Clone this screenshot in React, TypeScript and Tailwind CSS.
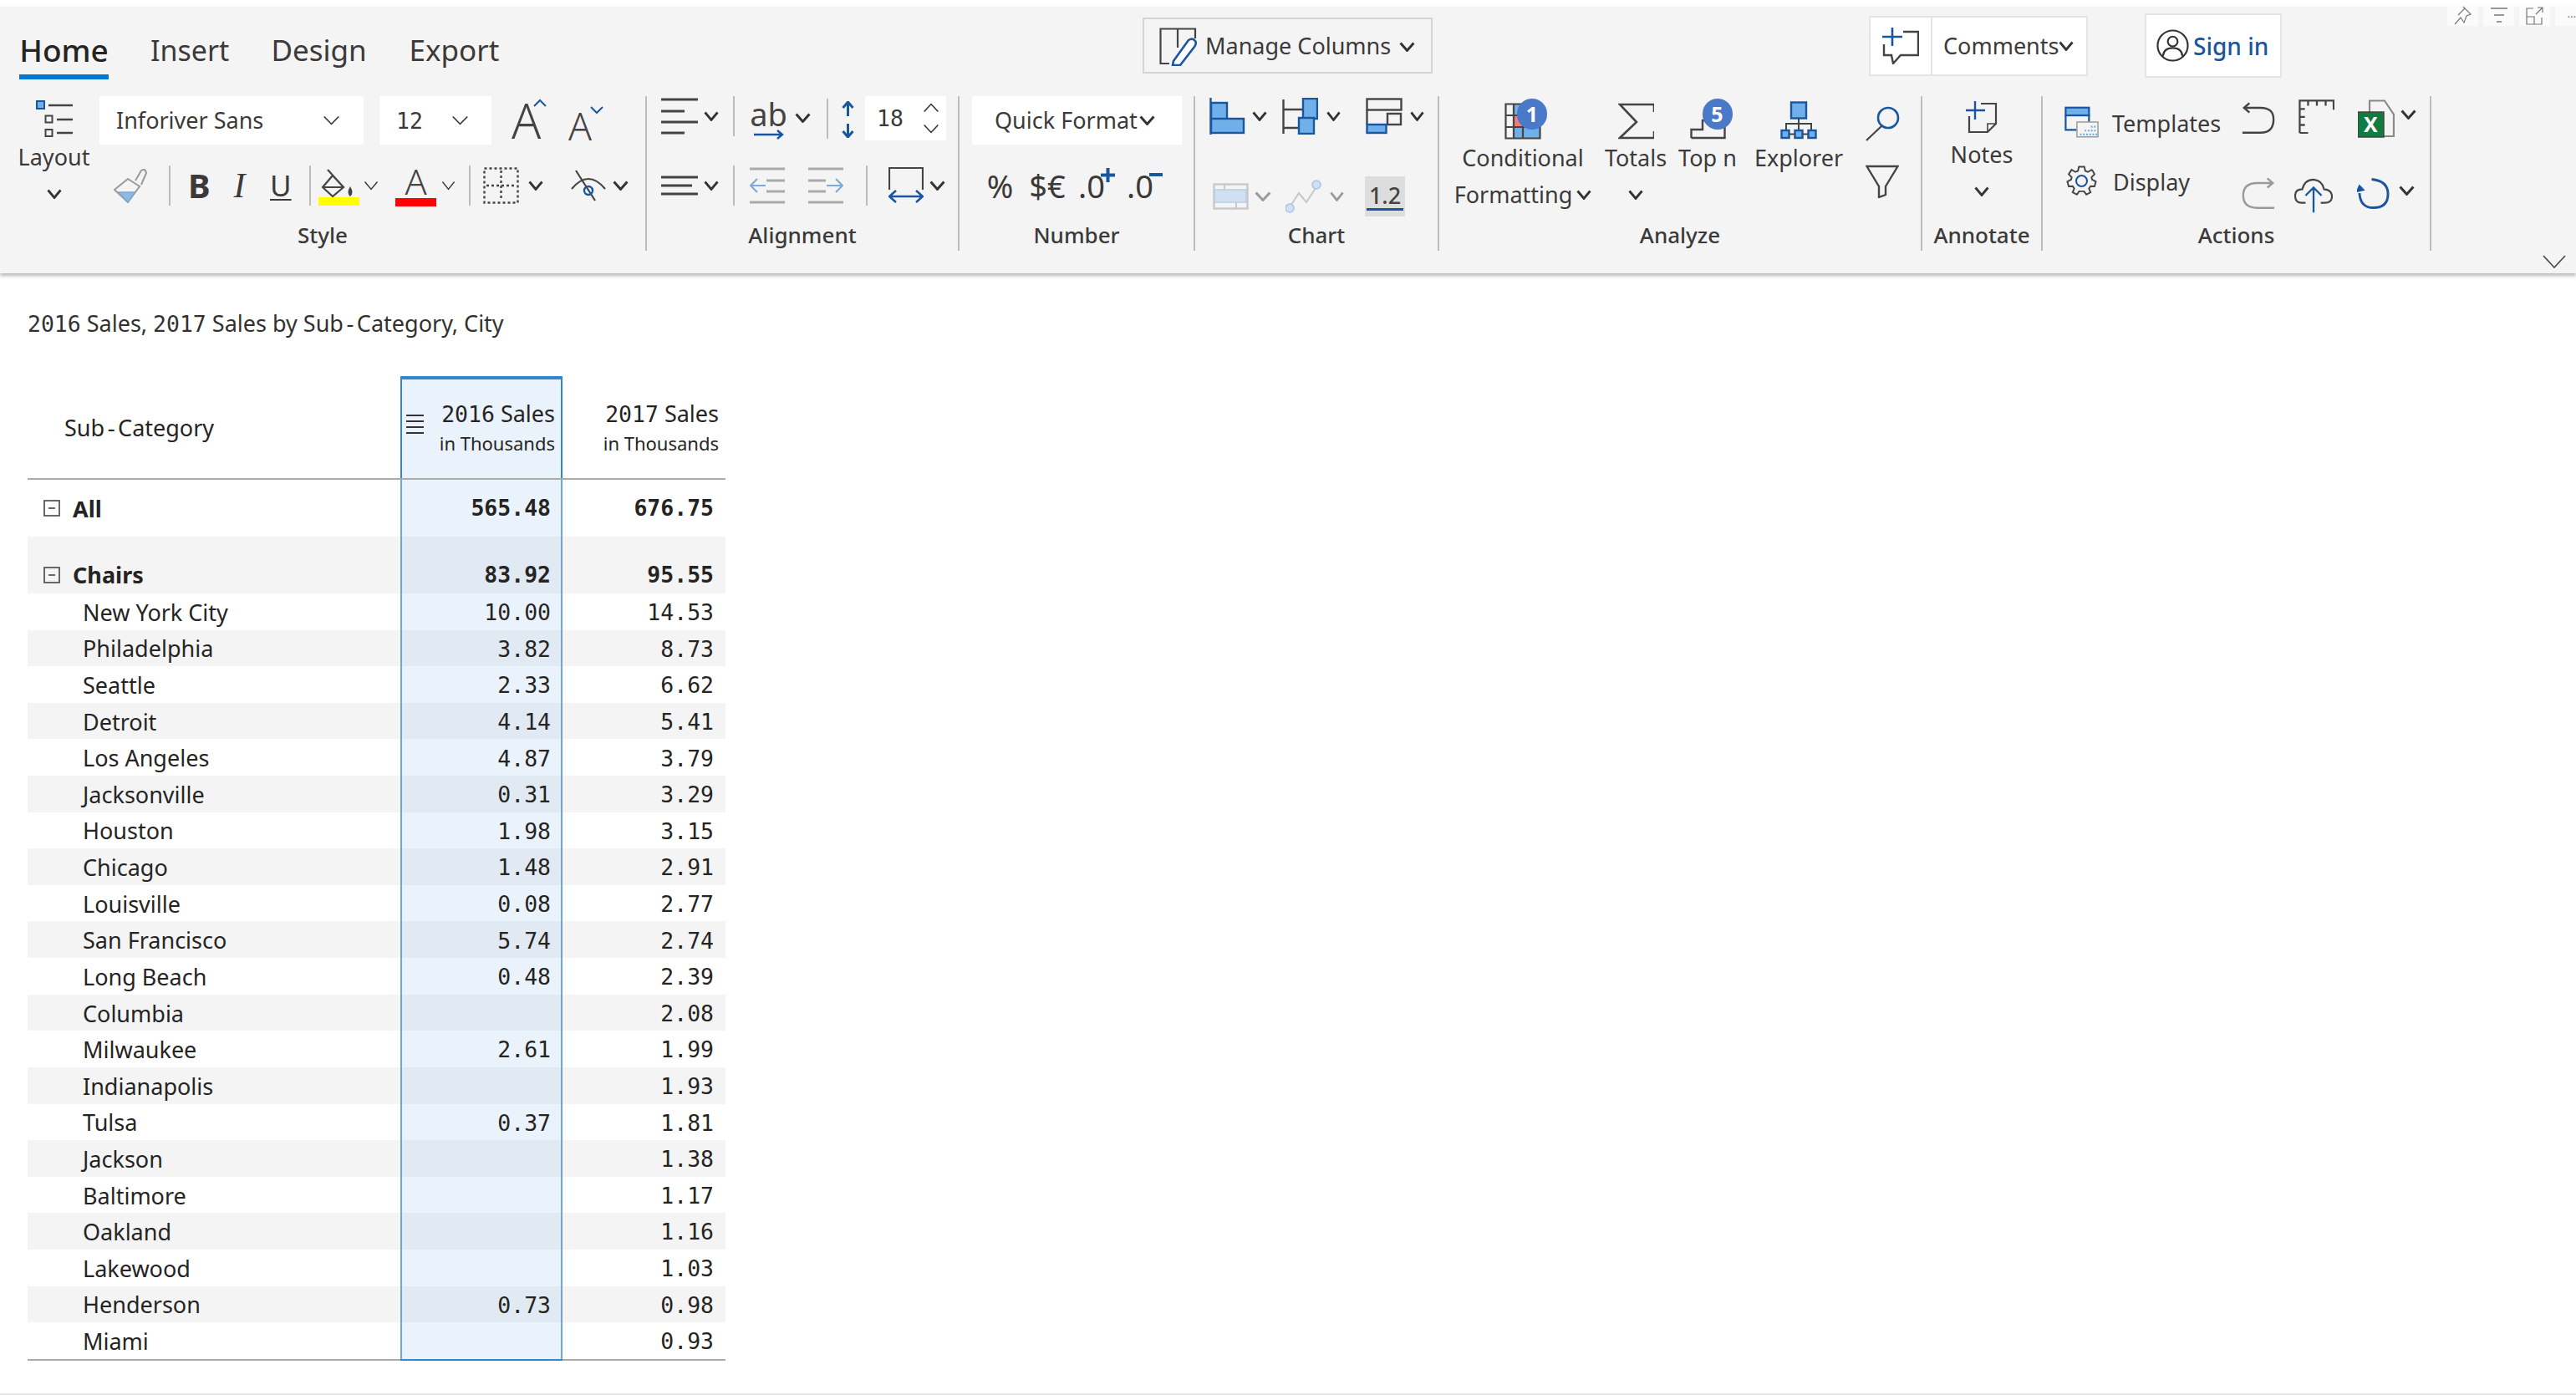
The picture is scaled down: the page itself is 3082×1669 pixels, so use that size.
import React from "react";

const D = "#444444";
const B = "#1a56a0";
const L = "#6fb0ea";

const Chev = ({ className = "", thin = false, w = 18, color = "#333333" }: { className?: string; thin?: boolean; w?: number; color?: string }) => (
  <svg width={w} height={12} viewBox="0 0 18 12" preserveAspectRatio="none" fill="none" className={`shrink-0 ${className}`}>
    <path d="M1.5 1.5 L9 10.5 L16.5 1.5" stroke={color} strokeWidth={thin ? 1.4 : 2.8} />
  </svg>
);

const Sep = ({ className = "" }: { className?: string }) => <div className={`w-[2px] shrink-0 bg-[#bdbdbd] ${className}`} />;

const Group = ({ className, label, children }: { className: string; label: string; children: React.ReactNode }) => (
  <div className={`flex h-full shrink-0 flex-col border-r-2 border-[#bcbcbc] ${className}`}>
    <div className="h-[148px]">{children}</div>
    <div className="flex h-[35px] items-center justify-center text-[26px] font-medium leading-none text-[#3b3a39]">{label}</div>
  </div>
);

const M = ({ children }: { children: React.ReactNode }) => <span className="font-['DejaVu_Sans_Mono',monospace] text-[0.98em]">{children}</span>;

const Badge = ({ n, className }: { n: string; className: string }) => (
  <div className={`absolute flex h-[37px] w-[36px] items-center justify-center rounded-full bg-[#4a79c9] text-[25px] font-bold leading-none text-white ${className}`}>{n}</div>
);

const rows: [string, string, string][] = [
  ["New York City", "10.00", "14.53"],
  ["Philadelphia", "3.82", "8.73"],
  ["Seattle", "2.33", "6.62"],
  ["Detroit", "4.14", "5.41"],
  ["Los Angeles", "4.87", "3.79"],
  ["Jacksonville", "0.31", "3.29"],
  ["Houston", "1.98", "3.15"],
  ["Chicago", "1.48", "2.91"],
  ["Louisville", "0.08", "2.77"],
  ["San Francisco", "5.74", "2.74"],
  ["Long Beach", "0.48", "2.39"],
  ["Columbia", "", "2.08"],
  ["Milwaukee", "2.61", "1.99"],
  ["Indianapolis", "", "1.93"],
  ["Tulsa", "0.37", "1.81"],
  ["Jackson", "", "1.38"],
  ["Baltimore", "", "1.17"],
  ["Oakland", "", "1.16"],
  ["Lakewood", "", "1.03"],
  ["Henderson", "0.73", "0.98"],
  ["Miami", "", "0.93"],
];

const MinusBox = ({ className = "" }: { className?: string }) => (
  <svg width={20} height={20} fill="none" className={`shrink-0 ${className}`}>
    <rect x="1" y="1" width="18" height="18" stroke="#444" strokeWidth="1.6" />
    <path d="M6 10 H14" stroke="#444" strokeWidth="1.6" />
  </svg>
);

const StyleGroup = () => (
  <Group className="w-[774px]" label="Style">
    <div className="flex h-full">
      <div className="ml-[22px] mr-[12px] flex w-[85px] flex-col items-center">
        <svg width={44} height={46} fill="none" className="mt-[5px]">
          <rect x="1" y="1" width="9" height="9" fill={L} stroke={B} strokeWidth="2" />
          <path d="M15 6 H44 M25 23 H44 M25 39 H44" stroke={D} strokeWidth="2.4" />
          <rect x="11.5" y="18.5" width="8" height="8" stroke={D} strokeWidth="2" />
          <rect x="11.5" y="35" width="8" height="8" stroke={D} strokeWidth="2" />
        </svg>
        <div className="text-[27px] leading-[44px] text-[#3b3a39]">Layout</div>
        <Chev className="mt-[16px]" />
      </div>
      <div className="flex flex-col">
        <div className="flex h-[58px] items-start text-[27px] text-[#3b3a39]">
          <div className="flex h-[58px] w-[316px] items-center justify-between bg-white pl-[20px] pr-[28px]">
            <span>Inforiver Sans</span>
            <Chev thin w={21} />
          </div>
          <div className="ml-[19px] flex h-[58px] w-[134px] items-center justify-between bg-white pl-[20px] pr-[27px]">
            <span><M>12</M></span>
            <Chev thin w={21} />
          </div>
          <div className="relative ml-[24px] w-[40px]">
            <span className="block text-[58px] font-light leading-[58px] text-[#444]">A</span>
            <svg width={16} height={10} fill="none" className="absolute left-[26px] top-[3px]"><path d="M1 9 L8 2 L15 9" stroke={B} strokeWidth="2" /></svg>
          </div>
          <div className="relative ml-[28px] w-[40px]">
            <span className="mt-[6px] block text-[46px] font-light leading-[58px] text-[#444]">A</span>
            <svg width={16} height={10} fill="none" className="absolute left-[26px] top-[12px]"><path d="M1 1 L8 8 L15 1" stroke={B} strokeWidth="2" /></svg>
          </div>
        </div>
        <div className="mt-[24px] flex h-[50px] items-center text-[#3b3a39]">
          <svg width={40} height={42} fill="none" className="ml-[17px] shrink-0">
            <path d="M17 13 L31 22 L17 41 L1 26 Z" stroke="#9a9a9a" strokeWidth="2" />
            <path d="M6 29 L25 29 L17 41 Z" fill="#8db9e3" stroke="#7aa9d8" strokeWidth="1.5" />
            <path d="M26 15 L33 3 Q38 0 39 6 L33 20" stroke="#9a9a9a" strokeWidth="2" />
          </svg>
          <Sep className="ml-[26px] h-[48px]" />
          <span className="ml-[21px] w-[24px] text-center text-[40px] font-bold leading-[50px]">B</span>
          <span className="ml-[25px] w-[25px] text-center font-['Liberation_Serif',serif] text-[42px] italic leading-[50px]">I</span>
          <span className="ml-[24px] w-[23px] text-center text-[35px] leading-[46px] underline decoration-2 underline-offset-[3px]">U</span>
          <Sep className="ml-[24px] h-[48px]" />
          <svg width={49} height={50} fill="none" className="ml-[9px] shrink-0">
            <path d="M5 27 L17 13 L30 27 L17 38 Z M5 27 H30 M11 6 L30 27" stroke={D} strokeWidth="2.2" />
            <path d="M38 26 Q33 34 38 38 Q43 34 38 26 Z" fill={D} />
            <rect x="0" y="39" width="49" height="10" fill="#ffff00" />
          </svg>
          <Chev thin className="ml-[5px]" />
          <div className="ml-[20px] flex h-[50px] w-[49px] flex-col items-center">
            <span className="text-[43px] font-light leading-[40px] text-[#444]">A</span>
            <div className="h-[10px] w-[49px] bg-[#ff0000]" />
          </div>
          <Chev thin w={17} className="ml-[6px]" />
          <Sep className="ml-[16px] h-[48px]" />
          <svg width={43} height={44} fill="none" className="ml-[15px] shrink-0">
            <rect x="1.5" y="1.5" width="40" height="41" stroke={D} strokeWidth="2.4" strokeDasharray="3 3" />
            <path d="M21.5 4 V40 M4 22 H40" stroke={D} strokeWidth="2.4" strokeDasharray="3 3" />
          </svg>
          <Chev className="ml-[11px]" />
          <svg width={42} height={40} fill="none" className="ml-[33px] shrink-0">
            <path d="M1 24 Q21 0 41 24" stroke={D} strokeWidth="2.2" />
            <path d="M6 2 L29 38" stroke={D} strokeWidth="2.2" />
            <circle cx="21" cy="26" r="5" stroke={B} strokeWidth="2.4" />
          </svg>
          <Chev w={19} className="ml-[8px]" />
        </div>
      </div>
    </div>
  </Group>
);

const AlignmentGroup = () => (
  <Group className="w-[374px]" label="Alignment">
    <div className="flex h-[68px] items-start">
      <svg width={44} height={44} fill="none" className="ml-[17px] mt-[2px] shrink-0">
        <path d="M0 2 H44 M0 16 H28 M0 29 H44 M0 42 H28" stroke={D} strokeWidth="3" />
      </svg>
      <Chev className="ml-[7px] mt-[18px]" />
      <Sep className="ml-[17px] h-[48px]" />
      <div className="ml-[22px] flex w-[37px] flex-col items-center">
        <span className="text-[38px] leading-[42px] text-[#444]">ab</span>
        <svg width={37} height={12} fill="none" className="mt-[-2px]"><path d="M1 6 H35 M29 1 L35 6 L29 11" stroke={B} strokeWidth="2.4" /></svg>
      </div>
      <Chev className="ml-[13px] mt-[20px]" w={19} />
      <Sep className="ml-[19px] mt-[3px] h-[48px]" />
      <svg width={15} height={44} fill="none" className="ml-[16px] mt-[6px] shrink-0">
        <path d="M7.5 2 V18 M7.5 27 V42 M1.5 8 L7.5 1 L13.5 8 M1.5 36 L7.5 43 L13.5 36" stroke={B} strokeWidth="3" />
      </svg>
      <div className="ml-[13px] flex h-[53px] w-[97px] items-center justify-between bg-white pl-[14px] pr-[8px]">
        <span className="text-[27px] leading-none text-[#3b3a39]"><M>18</M></span>
        <div className="flex flex-col gap-[13px]">
          <Chev thin w={20} className="rotate-180" />
          <Chev thin w={20} />
        </div>
      </div>
    </div>
    <div className="mt-[14px] flex h-[50px] items-center">
      <svg width={44} height={24} fill="none" className="ml-[17px] shrink-0">
        <path d="M0 2 H44 M0 12 H37 M0 22 H44" stroke={D} strokeWidth="3" />
      </svg>
      <Chev className="ml-[7px]" />
      <Sep className="ml-[17px] h-[48px]" />
      <svg width={42} height={44} fill="none" className="ml-[18px] shrink-0">
        <path d="M0 2 H42 M20 16 H42 M20 29 H42 M0 42 H42" stroke="#aaaaaa" strokeWidth="3" />
        <path d="M1 22 H19 M9 14 L1 22 L9 30" stroke="#7fa9d8" strokeWidth="2.2" />
      </svg>
      <svg width={42} height={44} fill="none" className="ml-[28px] shrink-0">
        <path d="M0 2 H42 M0 16 H21 M0 29 H21 M0 42 H42" stroke="#aaaaaa" strokeWidth="3" />
        <path d="M22 22 H41 M33 14 L41 22 L33 30" stroke="#7fa9d8" strokeWidth="2.2" />
      </svg>
      <Sep className="ml-[27px] h-[48px]" />
      <svg width={42} height={44} fill="none" className="ml-[25px] shrink-0">
        <path d="M1 27 V1 H41 V27" stroke={D} strokeWidth="2.2" />
        <path d="M2 35 H40 M9 28 L1 35 L9 42 M33 28 L41 35 L33 42" stroke={B} strokeWidth="2.6" />
      </svg>
      <Chev w={19} className="ml-[7px]" />
    </div>
  </Group>
);

const NumberGroup = () => (
  <Group className="w-[282px]" label="Number">
    <div className="ml-[15px] flex h-[58px] w-[251px] items-center bg-white pl-[27px] text-[27px] text-[#3b3a39]">
      <span className="whitespace-nowrap">Quick Format</span>
      <Chev w={19} className="ml-[2px]" />
    </div>
    <div className="mt-[24px] flex h-[50px] items-center text-[38px] leading-none text-[#3b3a39]">
      <span className="ml-[30px] w-[37px] text-center">%</span>
      <span className="ml-[15px] w-[46px] text-center">$€</span>
      <span className="relative ml-[14px] w-[45px]">
        .0
        <svg width={17} height={17} className="absolute left-[27px] top-[-2px]"><path d="M8.5 0 V17 M0 8.5 H17" stroke={B} strokeWidth="4" /></svg>
      </span>
      <span className="relative ml-[13px] w-[44px]">
        .0
        <span className="absolute left-[27px] top-[4px] h-[4px] w-[16px] bg-[#1a56a0]" />
      </span>
    </div>
  </Group>
);

const ChartGroup = () => (
  <Group className="w-[292px]" label="Chart">
    <div className="flex h-[68px] items-start">
      <svg width={43} height={44} fill="none" className="ml-[17px] mt-[2px] shrink-0">
        <path d="M1.5 0 V44" stroke={B} strokeWidth="2.4" />
        <rect x="2" y="6" width="19" height="20" fill={L} stroke={B} strokeWidth="2.4" />
        <rect x="2" y="25" width="39" height="17" fill={L} stroke={B} strokeWidth="2.4" />
      </svg>
      <Chev className="ml-[8px] mt-[18px]" />
      <svg width={43} height={44} fill="none" className="ml-[18px] mt-[2px] shrink-0">
        <path d="M1.5 2 V43 M2 14 H25 M2 36 H20" stroke={D} strokeWidth="2.4" />
        <rect x="25" y="1" width="17" height="24" fill={L} stroke={B} strokeWidth="2.4" />
        <rect x="20" y="24" width="18" height="19" fill={L} stroke={B} strokeWidth="2.4" />
      </svg>
      <Chev className="ml-[10px] mt-[18px]" w={17} />
      <svg width={44} height={44} fill="none" className="ml-[30px] mt-[2px] shrink-0">
        <rect x="1.5" y="1.5" width="41" height="13" stroke={D} strokeWidth="2.4" />
        <rect x="26" y="19" width="16" height="13" stroke={D} strokeWidth="2.4" />
        <path d="M1.5 14 V32" stroke={D} strokeWidth="2.4" />
        <rect x="1.5" y="32" width="23" height="10" fill={L} stroke={B} strokeWidth="2.4" />
      </svg>
      <Chev className="ml-[9px] mt-[18px]" w={17} />
    </div>
    <div className="mt-[28px] flex h-[48px] items-center">
      <svg width={43} height={32} fill="none" className="ml-[21px] shrink-0">
        <rect x="1.5" y="1.5" width="40" height="29" stroke="#c8c8c8" strokeWidth="2.4" />
        <rect x="2" y="8" width="38" height="15" fill="#cfe0f2" stroke="#b8cde3" strokeWidth="1.5" />
        <path d="M14 1 V8 M28 23 V31" stroke="#c8c8c8" strokeWidth="2" />
      </svg>
      <Chev className="ml-[7px]" w={20} color="#9c9c9c" />
      <svg width={43} height={42} fill="none" className="ml-[17px] shrink-0">
        <path d="M5 34 L16 17 L25 28 L38 8" stroke="#c8c8c8" strokeWidth="2" />
        <circle cx="5" cy="35" r="5" fill="#cfe0f2" stroke="#a9c4e2" strokeWidth="1.6" />
        <circle cx="37" cy="7" r="5" fill="#cfe0f2" stroke="#a9c4e2" strokeWidth="1.6" />
      </svg>
      <Chev className="ml-[10px]" w={17} color="#9c9c9c" />
      <div className="ml-[25px] flex h-[48px] w-[48px] flex-col items-center justify-center bg-[#dddddd]">
        <span className="text-[27px] font-medium leading-[30px] text-[#444]">1.2</span>
        <div className="h-[3px] w-[44px] bg-[#1a56a0]" />
      </div>
    </div>
  </Group>
);

const IconCol = ({ className, icon, children }: { className: string; icon: React.ReactNode; children: React.ReactNode }) => (
  <div className={`flex shrink-0 flex-col items-center text-[27px] leading-[44px] text-[#3b3a39] ${className}`}>
    <div className="relative flex h-[52px] w-full items-end justify-center">{icon}</div>
    {children}
  </div>
);

const AnalyzeGroup = () => (
  <Group className="w-[578px]" label="Analyze">
    <div className="flex h-full">
      <IconCol
        className="ml-[5px] w-[190px]"
        icon={
          <div className="relative h-[44px] w-[44px]">
            <svg width={44} height={44} fill="none">
              <rect x="11" y="1" width="11" height="13" fill={L} />
              <rect x="11" y="15" width="11" height="13" fill="#f07c7c" />
              <rect x="11" y="29" width="31" height="14" fill={L} />
              <path d="M1.5 1.5 H42.5 V42.5 H1.5 Z M1.5 15 H42.5 M1.5 29 H42.5 M11 1.5 V42.5 M22 1.5 V42.5" stroke={D} strokeWidth="2.2" />
            </svg>
            <Badge n="1" className="left-[15px] top-[-5px]" />
          </div>
        }
      >
        <div>Conditional</div>
        <div className="flex items-center">Formatting<Chev w={18} className="ml-[5px]" /></div>
      </IconCol>
      <IconCol
        className="ml-[2px] w-[76px]"
        icon={
          <svg width={43} height={44} fill="none">
            <path d="M43 11 V2 H2 L22 23 L2 42 H43 V34" stroke={D} strokeWidth="2.6" />
          </svg>
        }
      >
        <div>Totals</div>
        <Chev className="mt-[16px]" />
      </IconCol>
      <IconCol
        className="ml-[10px] w-[76px]"
        icon={
          <div className="relative h-[44px] w-[43px]">
            <svg width={43} height={44} fill="none">
              <path d="M1.5 42 H41.5 V20 M1.5 42 V32 H15 V21 H30" stroke={D} strokeWidth="2.4" />
            </svg>
            <Badge n="5" className="left-[15px] top-[-5px]" />
          </div>
        }
      >
        <div>Top n</div>
      </IconCol>
      <IconCol
        className="ml-[16px] w-[110px]"
        icon={
          <svg width={44} height={46} fill="none">
            <rect x="13" y="1.5" width="18" height="19" fill={L} stroke={B} strokeWidth="2.4" />
            <path d="M22 20 V34 M7 34 V27 H37 V34" stroke={D} strokeWidth="2" />
            <rect x="1.5" y="35" width="9" height="9" fill={L} stroke={B} strokeWidth="2.4" />
            <rect x="17.5" y="35" width="9" height="9" fill={L} stroke={B} strokeWidth="2.4" />
            <rect x="33.5" y="35" width="9" height="9" fill={L} stroke={B} strokeWidth="2.4" />
            <path d="M10 39.5 H18 M26 39.5 H34" stroke={D} strokeWidth="2" />
          </svg>
        }
      >
        <div>Explorer</div>
      </IconCol>
      <div className="ml-[20px] flex w-[50px] flex-col items-center">
        <svg width={42} height={42} fill="none" className="mt-[12px]">
          <circle cx="28" cy="14" r="12" stroke={B} strokeWidth="2.6" />
          <path d="M20 24 L2 41" stroke={D} strokeWidth="2.2" />
        </svg>
        <svg width={40} height={40} fill="none" className="mt-[28px]">
          <path d="M1.5 2 H38.5 L24 26 V36 L16 39 V26 Z" stroke={D} strokeWidth="2.4" />
        </svg>
      </div>
    </div>
  </Group>
);

const AnnotateGroup = () => (
  <Group className="w-[144px]" label="Annotate">
    <div className="flex flex-col items-center text-[27px] leading-[44px] text-[#3b3a39]">
      <svg width={38} height={40} fill="none" className="mt-[6px]">
        <path d="M4 18 V37 H26 L36 27 V3 H18" stroke={D} strokeWidth="2.2" />
        <path d="M26 37 V27 H36" stroke={D} strokeWidth="1.6" />
        <path d="M0 11 H23 M11 0 V22" stroke={B} strokeWidth="2.4" />
      </svg>
      <div className="mt-[2px]">Notes</div>
      <Chev className="mt-[16px]" />
    </div>
  </Group>
);

const ActionsGroup = () => (
  <Group className="w-[465px]" label="Actions">
    <div className="flex h-[75px] items-start text-[27px] leading-[44px] text-[#3b3a39]">
      <svg width={41} height={40} viewBox="0 0 44 40" fill="none" className="ml-[26px] mt-[11px] shrink-0">
        <rect x="1.5" y="1.5" width="30" height="10" fill={L} stroke={B} strokeWidth="2.4" />
        <path d="M1.5 11 V30 H16 M31.5 11 V20" stroke={B} strokeWidth="2.4" />
        <path d="M16 20 H43 V39 H16 Z" stroke="#9a9a9a" strokeWidth="1.6" />
        <path d="M20 36 H42 M26 31 H42 M34 26 H42" stroke="#6fa7dd" strokeWidth="2.4" strokeDasharray="2 2" />
      </svg>
      <span className="ml-[16px] mt-[11px] w-[128px] whitespace-nowrap">Templates</span>
      <svg width={40} height={40} viewBox="0 0 43 40" fill="none" className="ml-[27px] mt-[7px] shrink-0">
        <path d="M1 38 H24 Q41 38 41 21 Q41 6 24 6 H3 M10 0 L3 6 L10 12" stroke={D} strokeWidth="2.6" />
      </svg>
      <svg width={43} height={42} viewBox="0 0 45 42" fill="none" className="ml-[28px] mt-[3px] shrink-0">
        <path d="M1.5 42 V1.5 H44 V13 M1.5 42 H12 M1.5 12 H8 M1.5 22 H8 M1.5 32 H8 M12 2 V8 M23 2 V8 M34 2 V8" stroke={D} strokeWidth="2.4" />
      </svg>
      <div className="relative ml-[28px] mt-[4px] h-[46px] w-[44px] shrink-0">
        <svg width={44} height={46} fill="none">
          <path d="M14 16 V1.5 H32 L43 18 V44 H30" stroke="#888" strokeWidth="2.2" fill="#f4f4f4" />
          <rect x="0" y="15" width="31" height="30" fill="#107c41" stroke="#444" strokeWidth="1.5" />
        </svg>
        <span className="absolute left-[7px] top-[13px] text-[25px] font-bold leading-[32px] text-white">X</span>
      </div>
      <Chev w={19} className="ml-[7px] mt-[16px]" />
    </div>
    <div className="flex h-[73px] items-start text-[27px] leading-[44px] text-[#3b3a39]">
      <svg width={39} height={39} viewBox="0 0 24 24" fill="none" className="ml-[27px] mt-[7px] shrink-0">
        <circle cx="12" cy="12" r="4" stroke={B} strokeWidth="1.3" />
        <path d="M10 1.5 H14 L14.7 4.6 L16.6 5.4 L19.4 3.8 L20.2 4.6 L21.5 7 L19.3 9.2 L19.7 11 L22.5 12.5 L21.5 16 L18.6 15.8 L17.4 17.6 L18.6 20.4 L15.5 22 L13.8 19.6 H10.2 L8.5 22 L5.4 20.4 L6.6 17.6 L5.4 15.8 L2.5 16 L1.5 12.5 L4.3 11 L4.7 9.2 L2.5 7 L4.6 3.8 L7.4 5.4 L9.3 4.6 Z" stroke={D} strokeWidth="1.2" />
      </svg>
      <span className="ml-[18px] mt-[6px] w-[91px]">Display</span>
      <svg width={40} height={41} viewBox="0 0 43 41" fill="none" className="ml-[63px] mt-[21px] shrink-0">
        <path d="M42 39 H20 Q2 39 2 23 Q2 7 20 7 H40 M33 1 L40 7 L33 13" stroke="#9a9a9a" strokeWidth="2.6" />
      </svg>
      <svg width={46} height={42} viewBox="0 0 48 42" fill="none" className="ml-[23px] mt-[23px] shrink-0">
        <path d="M14 30 H9 Q1 30 1 21 Q1 13 10 13 Q13 1 24 1 Q35 2 37 13 Q47 14 47 22 Q47 30 38 30 H33" stroke={D} strokeWidth="2.2" />
        <path d="M24 42 V12 M14 21 L24 11 L34 21" stroke={B} strokeWidth="2.4" />
      </svg>
      <svg width={39} height={38} viewBox="0 0 40 38" fill="none" className="ml-[29px] mt-[23px] shrink-0">
        <path d="M18 1 Q38 3 38 19 Q38 36 20 36 Q4 36 3 18" stroke={B} strokeWidth="3" />
        <path d="M0 16 L3 9 L8 14 Z" fill={B} stroke={B} strokeWidth="2" />
      </svg>
      <Chev w={19} className="ml-[11px] mt-[32px]" />
    </div>
  </Group>
);

const CornerIcons = () => (
  <div className="absolute right-0 top-[7px] flex gap-[6px]">
    {[
      <path key="a" d="M12 1 L21 10 L16 12 L13 20 L9 14 L2 22 M6 11 L14 3" stroke="#777" strokeWidth="1.2" fill="none" />,
      <path key="b" d="M2 3 H22 M6 11 H18 M9 19 H15" stroke="#777" strokeWidth="1.6" fill="none" />,
      <path key="c" d="M10 3 H2 V22 H20 V14 M2 13 H11 V22 M13 10 L21 2 M15 2 H21 V8" stroke="#777" strokeWidth="1.2" fill="none" />,
    ].map((p, i) => (
      <div key={i} className="flex h-[24px] w-[37px] items-center justify-center bg-[#fbfbfb]">
        <svg width={24} height={24}>{p}</svg>
      </div>
    ))}
    <div className="flex h-[24px] w-[25px] items-center justify-end bg-[#fbfbfb] pb-[6px] text-[13px] leading-none text-[#777]">...</div>
  </div>
);

export default function App() {
  return (
    <div className="relative flex h-[1669px] w-[3082px] flex-col overflow-hidden bg-white pt-[8px] font-['Noto_Sans','Open_Sans',sans-serif] text-[#252423]">
      <div className="relative h-[319px] shrink-0 bg-[#f4f4f4] shadow-[0_3px_4px_rgba(0,0,0,0.28)]">
        <div className="flex h-[107px] items-start">
          <div className="ml-[23px] h-[87px] w-[107px] whitespace-nowrap border-b-[6px] border-[#0078d4] pt-[30px] text-center text-[37px] font-medium leading-[44px] text-[#252423]">Home</div>
          <div className="ml-[50px] h-[87px] w-[94px] pt-[30px] text-center text-[34px] leading-[44px] text-[#3b3a39]">Insert</div>
          <div className="ml-[50px] h-[87px] w-[115px] pt-[30px] text-center text-[35px] leading-[44px] text-[#3b3a39]">Design</div>
          <div className="ml-[50px] h-[87px] w-[109px] pt-[30px] text-center text-[35px] leading-[44px] text-[#3b3a39]">Export</div>
          <div className="ml-[769px] mt-[13px] flex h-[67px] w-[347px] shrink-0 items-center border-2 border-[#d4d4d4] pt-[2px] text-[27px] text-[#3b3a39]">
            <svg width={46} height={46} fill="none" className="ml-[18px] shrink-0">
              <path d="M12 43 H1.5 V1.5 H43 V13 M22 2 V24" stroke={D} strokeWidth="2.2" />
              <path d="M17 40 L35 15 Q40 12 43 16 Q45 19 42 23 L25 45 L16 45 Z" fill="#fff" stroke={B} strokeWidth="2.6" />
            </svg>
            <span className="ml-[9px] whitespace-nowrap">Manage Columns</span>
            <Chev w={19} className="ml-[10px]" />
          </div>
          <div className="ml-[522px] mt-[11px] flex h-[72px] w-[262px] shrink-0 items-center border-2 border-[#e4e4e4] bg-white text-[27px] text-[#3b3a39]">
            <div className="flex h-full w-[74px] shrink-0 items-center justify-center border-r-2 border-[#e4e4e4]">
              <svg width={44} height={44} fill="none">
                <path d="M25 5 H43 V33 H22 L13 43 L11 33 H2 V20" stroke={D} strokeWidth="2.4" />
                <path d="M0 11 H24 M12 0 V22" stroke={B} strokeWidth="2.6" />
              </svg>
            </div>
            <span className="ml-[13px]">Comments</span>
            <Chev w={18} />
          </div>
          <div className="ml-[68px] mt-[8px] flex h-[77px] w-[164px] shrink-0 items-center border-2 border-[#e4e4e4] bg-white text-[28px] font-medium text-[#1a56a0]">
            <svg width={39} height={39} viewBox="0 0 40 40" fill="none" className="ml-[12px] shrink-0">
              <circle cx="20" cy="20" r="18.5" stroke="#333" strokeWidth="2.2" />
              <circle cx="20" cy="15" r="6" stroke="#333" strokeWidth="2.2" />
              <path d="M8 33 Q9 23 20 23 Q31 23 32 33" stroke="#333" strokeWidth="2.2" />
            </svg>
            <span className="ml-[5px] whitespace-nowrap">Sign in</span>
          </div>
        </div>
        <div className="flex h-[185px]">
          <StyleGroup />
          <AlignmentGroup />
          <NumberGroup />
          <ChartGroup />
          <AnalyzeGroup />
          <AnnotateGroup />
          <ActionsGroup />
        </div>
        <svg width={28} height={16} fill="none" className="absolute bottom-[6px] right-[12px]">
          <path d="M1 1 L14 15 L27 1" stroke="#444" strokeWidth="1.6" />
        </svg>
      </div>
      <CornerIcons />

      <div className="mt-[38px] flex h-[44px] items-center pl-[33px] text-[27px] leading-none text-[#323130]">
        <span><M>2016</M> Sales, <M>2017</M> Sales by Sub<M>-</M>Category, City</span>
      </div>

      <div className="ml-[33px] mt-[41px] w-[835px] text-[27px] leading-none">
        <div className="grid h-[124px] grid-cols-[446px_194px_195px] border-b-2 border-[#ababab]">
          <div className="flex items-center pl-[44px] pt-[3px]"><span>Sub<M>-</M>Category</span></div>
          <div className="relative flex flex-col items-end justify-center border-x-2 border-t-4 border-[#2f86d2] bg-[#eaf2fb] pb-[4px] pr-[7px]">
            <div className="absolute left-[5px] top-[42px] flex w-[21px] flex-col gap-[5px]">
              <div className="h-[2px] bg-[#333]" />
              <div className="h-[2px] bg-[#333]" />
              <div className="h-[2px] bg-[#333]" />
              <div className="h-[2px] bg-[#333]" />
            </div>
            <div className="leading-[36px]"><M>2016</M> Sales</div>
            <div className="text-[22px] leading-[32px]">in Thousands</div>
          </div>
          <div className="flex flex-col items-end justify-center pr-[8px]">
            <div className="leading-[36px]"><M>2017</M> Sales</div>
            <div className="text-[22px] leading-[32px]">in Thousands</div>
          </div>
        </div>

        <div className="grid h-[68px] grid-cols-[446px_194px_195px] font-bold">
          <div className="flex items-center pl-[19px]"><MinusBox /><span className="ml-[15px]">All</span></div>
          <div className="flex items-center justify-end border-x-2 border-[#6ea6d8] bg-[#eaf2fb] pr-[12px]"><M>565.48</M></div>
          <div className="flex items-center justify-end pr-[14px]"><M>676.75</M></div>
        </div>
        <div className="grid h-[68px] grid-cols-[446px_194px_195px] bg-[#f4f4f4] pt-[23px] font-bold">
          <div className="flex items-center pl-[19px]"><MinusBox /><span className="ml-[15px]">Chairs</span></div>
          <div className="-mt-[23px] flex items-center justify-end border-x-2 border-[#6ea6d8] bg-[#e1e9f2] pr-[12px] pt-[25px]"><M>83.92</M></div>
          <div className="flex items-center justify-end pr-[14px] pt-[2px]"><M>95.55</M></div>
        </div>
        {rows.map(([city, a, b], i) => (
          <div key={city} className={`grid h-[43.62px] grid-cols-[446px_194px_195px] ${i % 2 === 1 ? "bg-[#f4f4f4]" : ""}`}>
            <div className="flex items-center pl-[66px] pt-[1px]">{city}</div>
            <div className={`flex items-center justify-end border-x-2 border-[#6ea6d8] pr-[12px] pt-[3px] ${i % 2 === 1 ? "bg-[#e1e9f2]" : "bg-[#eaf2fb]"}`}><M>{a}</M></div>
            <div className="flex items-center justify-end pr-[14px] pt-[3px]"><M>{b}</M></div>
          </div>
        ))}
        <div className="grid h-[2px] grid-cols-[446px_194px_195px] bg-[#ababab]">
          <div />
          <div className="bg-[#2f86d2]" />
          <div />
        </div>
      </div>

      <div className="absolute bottom-0 left-0 h-[2px] w-full bg-[#e5e5e5]" />
    </div>
  );
}
